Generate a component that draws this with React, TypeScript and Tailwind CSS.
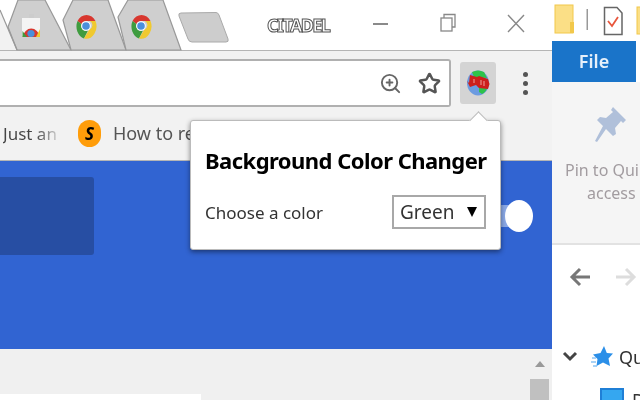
import { ChevronsRight, Star, ZoomIn } from "lucide-react";

function ChromeIcon() {
  return (
    <svg width="22" height="26" viewBox="0 0 22 26">
      <path d="M2.5 8 A10.5 12.5 0 0 1 20.5 8 L11 8 A5 5 0 0 0 6.5 11 Z" fill="#d8372f" />
      <path d="M2.5 8 A10.5 12.5 0 0 0 9 25.5 L13 17.5 A5 5 0 0 1 6.5 11 Z" fill="#3f9c3f" />
      <path d="M20.5 8 A10.5 12.5 0 0 1 9 25.5 L14 17 A5 5 0 0 0 15 8 Z" fill="#f0c92f" />
      <circle cx="11" cy="13" r="4.8" fill="#fff" />
      <circle cx="11" cy="13" r="3.8" fill="#4a8fdc" />
    </svg>
  );
}

function TabStrip() {
  return (
    <svg width="230" height="51" viewBox="0 0 230 51" className="shrink-0">
      <path d="M0 10 L17 50 L0 50 Z" fill="#f2f2f2" />
      <path d="M18 0 L8 27 L17 50 L71 50 L45 0 Z" fill="#cfcfcf" stroke="#999" strokeWidth="1.2" />
      <path d="M73 0 L63 20 L71 50 L126 50 L108 0 Z" fill="#cfcfcf" stroke="#999" strokeWidth="1.2" />
      <path d="M128 0 L118 17 L126 50 L181 50 L163 0 Z" fill="#cfcfcf" stroke="#999" strokeWidth="1.2" />
      <path d="M0 10 L17 50" fill="none" stroke="#999" strokeWidth="1.2" />
      <path d="M181 13 L216 12.5 Q218 12.5 219 15 L228 39 Q229 42 226 42 L192 42 Q189 42 188 39 L179 16 Q178 13 181 13 Z" fill="#cdcdcd" stroke="#aaa" />
      <rect x="22" y="18" width="18" height="19" fill="#f4f4f4" />
      <rect x="29" y="14" width="5" height="4" fill="#ccc" />
      <path d="M22.5 37 A9 11 0 0 1 40 37 Z" fill="#d8372f" />
      <path d="M22.5 37 L22.5 31 L27 37 Z" fill="#3f9c3f" />
      <path d="M36 37 L40 29 L40 37 Z" fill="#f0c92f" />
      <circle cx="31" cy="33.5" r="3.6" fill="#4a8fdc" />
      <g transform="translate(75 13)"><ChromeIcon /></g>
      <g transform="translate(130 13)"><ChromeIcon /></g>
    </svg>
  );
}

function WindowControls() {
  return (
    <svg width="160" height="50" viewBox="0 0 160 50" className="shrink-0">
      <rect x="3" y="23" width="15" height="2" fill="#8a8a8a" />
      <rect x="71" y="18" width="11" height="13" fill="#fff" stroke="#888" strokeWidth="1.3" />
      <path d="M74 18 V14.5 H85 V27 H82" fill="none" stroke="#888" strokeWidth="1.3" />
      <path d="M138 15 L154 32 M154 15 L138 32" stroke="#888" strokeWidth="1.4" />
    </svg>
  );
}

function ExtIcon() {
  return (
    <svg width="24" height="26" viewBox="0 0 24 26">
      <ellipse cx="12" cy="13" rx="11" ry="12.5" fill="#6c9be0" />
      <path d="M6 2 Q12 -1 18 2 L21 8 L8 7 Z" fill="#2ec24a" />
      <path d="M13 18 L21 18 Q20 22 16 24 L13 22 Z" fill="#2ec24a" />
      <path d="M1 11 L3 13 L4 5 L11 7 L13 6 L22 9 L23.5 14 L22 19 L13 18 L10 15 L4 17 Z" fill="#cc1f1c" />
      <path d="M8 9 V13 M15 10 V15 M18 11 V16" stroke="#e88c86" strokeWidth="1.2" />
    </svg>
  );
}

function PinIcon() {
  return (
    <svg width="32" height="38" viewBox="0 0 32 38">
      <path d="M18 1 L31 14 L28 17 L26 15 L20 22 L21 28 L18 30 L11 23 L2 36 L0 35 L8 20 L2 14 L5 11 L11 12 L18 6 L16 4 Z" fill="#b0c0da" />
    </svg>
  );
}

export default function App() {
  return (
    <div className="flex h-[400px] w-[640px] overflow-hidden bg-white font-['Noto_Sans',sans-serif] blur-[0.5px]">
      <div className="relative flex w-[552px] shrink-0 flex-col">
        {/* title bar */}
        <div className="flex h-[51px] shrink-0 items-start border-b border-[#b5b5b5] bg-white">
          <TabStrip />
          <span className="ml-[37px] mt-[12px] w-[62px] whitespace-nowrap text-[18px] font-bold leading-[26px] tracking-[-1.6px] text-white [-webkit-text-stroke:1px_#555]">
            CITADEL
          </span>
          <div className="ml-[41px]">
            <WindowControls />
          </div>
        </div>

        {/* toolbar */}
        <div className="flex h-[56px] shrink-0 bg-[#f2f2f2]">
          <div className="flex h-[48px] w-[451px] items-center justify-end gap-[16px] self-end rounded-r-[3px] border-y-2 border-r-2 border-[#b0b0b0] bg-white pr-[8px]">
            <ZoomIn size={23} strokeWidth={2} className="text-[#666]" />
            <Star size={23} strokeWidth={2.6} className="text-[#555]" />
          </div>
          <div className="mb-[3px] ml-[9px] flex h-[42px] w-[36px] items-center justify-center self-end rounded-[3px] bg-[#d4d4d4]">
            <ExtIcon />
          </div>
          <div className="mb-[12px] ml-[27px] flex flex-col gap-[4px] self-end">
            <span className="h-[5px] w-[5px] rounded-full bg-[#555]" />
            <span className="h-[5px] w-[5px] rounded-full bg-[#555]" />
            <span className="h-[5px] w-[5px] rounded-full bg-[#555]" />
          </div>
        </div>

        {/* bookmarks */}
        <div className="flex h-[54px] shrink-0 items-center overflow-hidden border-b border-[#b5b5b5] bg-[#f2f2f2] text-[18px] text-[#555]">
          <span className="ml-[3px] w-[54px] whitespace-nowrap bg-gradient-to-r from-[#444] from-60% to-[#ccc] bg-clip-text text-[17px] text-transparent">
            Just an
          </span>
          <span className="ml-[21px] flex h-[27px] w-[23px] items-center justify-center rounded-full bg-[#ff9d0a] text-[17px] font-bold italic leading-none text-black">
            S
          </span>
          <span className="ml-[12px] w-[120px] whitespace-nowrap">How to re</span>
          <ChevronsRight size={20} strokeWidth={3} className="ml-[176px] text-[#666]" />
        </div>

        {/* blue page */}
        <div className="flex h-[188px] shrink-0 items-start bg-[#3164d2] pt-[16px]">
          <div className="h-[78px] w-[94px] rounded-r-[3px] bg-[#274ea3]" />
          <div className="ml-[405px] mt-[23px] flex items-center">
            <span className="h-[22px] w-[12px] bg-[#8aa8e6]" />
            <span className="-ml-[6px] h-[32px] w-[28px] rounded-[50%] bg-white" />
          </div>
        </div>

        {/* lower area */}
        <div className="flex flex-1 justify-between bg-[#f0f0f0]">
          <div className="mt-[45px] h-[6px] w-[201px] bg-white" />
          <div className="mr-[3px] flex w-[19px] flex-col items-center">
            <span className="mt-[12px] h-0 w-0 border-x-[5px] border-b-[6px] border-x-transparent border-b-[#999]" />
            <span className="mt-[12px] h-[30px] w-[19px] bg-[#c0c0c0]" />
          </div>
        </div>

        {/* popup */}
        <div className="absolute left-[190px] top-[120px] h-[130px] w-[311px] rounded-[3px] border border-[#bbb] bg-white px-[14px] pt-[23px] shadow-[0_2px_5px_rgba(0,0,0,0.45)]">
          <span className="absolute -top-[7px] left-[281px] h-[13px] w-[13px] rotate-45 border-l border-t border-[#bbb] bg-white" />
          <div className="whitespace-nowrap text-[22px] font-bold leading-[32px] tracking-[-0.54px] text-black">
            Background Color Changer
          </div>
          <div className="mt-[21px] flex items-center justify-between">
            <span className="text-[17px] text-[#333]">Choose a color</span>
            <div className="-mt-[2px] flex h-[34px] w-[94px] items-center justify-between border-2 border-[#a8a8a8] pl-[6px] pr-[7px] text-[19px] text-[#333]">
              Green
              <span className="h-0 w-0 border-x-[5px] border-t-[10px] border-x-transparent border-t-black" />
            </div>
          </div>
        </div>
      </div>

      {/* explorer window */}
      <div className="flex flex-1 flex-col overflow-hidden">
        <div className="flex h-[41px] shrink-0 items-start overflow-hidden">
          <svg width="88" height="41" viewBox="0 0 88 41" className="shrink-0">
            <rect x="3" y="5" width="18" height="28" fill="#fbdf86" stroke="#f2c84b" />
            <rect x="18" y="22" width="4" height="11" fill="#f2c84b" />
            <rect x="34.5" y="9" width="1.5" height="21" fill="#999" />
            <path d="M52.5 7.5 H65 L70 13 V34.5 H52.5 Z" fill="#fff" stroke="#666" strokeWidth="1.5" />
            <path d="M56 21 L60 26 L66 17" fill="none" stroke="#e8563c" strokeWidth="1.8" />
            <rect x="85" y="7" width="4" height="27" fill="#fbdf86" stroke="#f2c84b" />
          </svg>
        </div>
        <div className="flex h-[41px] w-[84px] shrink-0 items-center justify-center bg-[#1a74c9] text-[18px] font-semibold text-[#e6f0fa]">
          File
        </div>
        <div className="flex h-[163px] shrink-0 flex-col overflow-hidden border-b-2 border-[#e2e2e2] bg-[#f5f5f5] text-[16px] leading-[23px] text-[#a29ca0]">
          <div className="mt-[24px] pl-[43px]">
            <PinIcon />
          </div>
          <div className="mt-[15px] whitespace-nowrap pl-[13px]">Pin to Qui</div>
          <div className="whitespace-nowrap pl-[35px]">access</div>
        </div>
        <div className="flex h-[97px] shrink-0 items-start pt-[22px]">
          <svg width="88" height="20" viewBox="0 0 88 20">
            <path d="M38 10 H21 M28 2 L20 10 L28 18" fill="none" stroke="#777" strokeWidth="3" />
            <path d="M64 10 H81 M74 2 L82 10 L74 18" fill="none" stroke="#ddd" strokeWidth="3" />
          </svg>
        </div>
        <div className="flex h-[30px] shrink-0 items-center text-[18px] text-[#333]">
          <svg width="62" height="26" viewBox="0 0 62 26" className="shrink-0">
            <path d="M12 9 L18 15 L24 9" fill="none" stroke="#444" strokeWidth="3" />
            <path d="M52 2 L54.8 9 L61 9.5 L56.5 14.5 L58 22 L51 18.5 L44.5 22 L45.5 15 L41 10.5 L48.5 9 Z" fill="#2b8fe8" />
            <path d="M40 14 H44 M39 18 H44 M41 22 H45" stroke="#8cc4f4" strokeWidth="1.5" />
          </svg>
          <span className="ml-[5px] whitespace-nowrap">Qu</span>
        </div>
        <div className="flex min-h-0 flex-1 items-start overflow-hidden pl-[48px] pt-[16px] text-[18px] leading-[24px] text-[#333]">
          <span className="h-[24px] w-[24px] shrink-0 border-2 border-[#1f7fd6] bg-[#35a7f0]" />
          <span className="ml-[8px]">D</span>
        </div>
      </div>
    </div>
  );
}
